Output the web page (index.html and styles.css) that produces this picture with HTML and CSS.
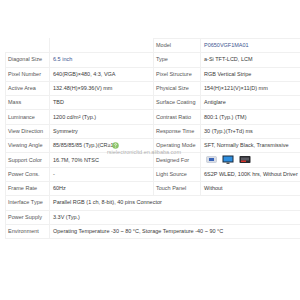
FILE: index.html
```html
<!DOCTYPE html>
<html>
<head>
<meta charset="utf-8">
<link rel="stylesheet" href="styles.css">
</head>
<body>
<div class="wrap">
<table class="spec">
<colgroup><col class="c1"><col class="c2"><col class="c3"><col class="c4"></colgroup>
<tr class="first"><td class="blank"></td><td class="blank"></td><td class="lab">Model</td><td class="val blue">P0650VGF1MA01</td></tr>
<tr><td class="lab">Diagonal Size</td><td class="val blue">6.5 inch</td><td class="lab">Type</td><td class="val">a-Si TFT-LCD, LCM</td></tr>
<tr><td class="lab">Pixel Number</td><td class="val">640(RGB)×480, 4:3, VGA</td><td class="lab">Pixel Structure</td><td class="val">RGB Vertical Stripe</td></tr>
<tr><td class="lab">Active Area</td><td class="val">132.48(H)×99.36(V) mm</td><td class="lab">Physical Size</td><td class="val">154(H)×121(V)×11(D) mm</td></tr>
<tr><td class="lab">Mass</td><td class="val">TBD</td><td class="lab">Surface Coating</td><td class="val">Antiglare</td></tr>
<tr><td class="lab">Luminance</td><td class="val">1200 cd/m² (Typ.)</td><td class="lab">Contrast Ratio</td><td class="val">800:1 (Typ.) (TM)</td></tr>
<tr><td class="lab">View Direction</td><td class="val">Symmetry</td><td class="lab">Response Time</td><td class="val">30 (Typ.)(Tr+Td) ms</td></tr>
<tr><td class="lab">Viewing Angle</td><td class="val">85/85/85/85 (Typ.)(CR≥10)</td><td class="lab">Operating Mode</td><td class="val">SFT, Normally Black, Transmissive</td></tr>
<tr><td class="lab">Support Color</td><td class="val">16.7M, 70% NTSC</td><td class="lab">Designed For</td><td class="val">
<span class="icons">
<svg width="11" height="9" viewBox="0 0 11 9"><rect x="0.5" y="1.5" width="10" height="6" rx="1" fill="#d8dde6" stroke="#b8c0cc" stroke-width="0.6"/><rect x="3" y="3" width="5" height="3" fill="#3a64b8"/></svg>
<svg width="12" height="9" viewBox="0 0 12 9"><rect x="0.5" y="0.5" width="11" height="7" fill="#1c2a3a"/><rect x="1.5" y="1.5" width="9" height="5" fill="#2f8fe0"/><rect x="4.5" y="7.5" width="3" height="1.5" fill="#555"/></svg>
<svg width="12" height="9" viewBox="0 0 12 9"><rect x="0.5" y="1" width="11" height="7" rx="0.8" fill="#2a2a2e"/><rect x="2" y="2.5" width="8" height="3" fill="#5a5a62"/><rect x="2" y="5.5" width="5" height="1.5" fill="#d8342c"/></svg>
</span></td></tr>
<tr><td class="lab">Power Cons.</td><td class="val">-</td><td class="lab">Light Source</td><td class="val">6S2P WLED, 100K hrs, Without Driver</td></tr>
<tr><td class="lab">Frame Rate</td><td class="val">60Hz</td><td class="lab">Touch Panel</td><td class="val">Without</td></tr>
<tr><td class="lab">Interface Type</td><td class="val" colspan="3">Parallel RGB (1 ch, 8-bit), 40 pins Connector</td></tr>
<tr><td class="lab">Power Supply</td><td class="val" colspan="3">3.3V (Typ.)</td></tr>
<tr><td class="lab">Environment</td><td class="val" colspan="3">Operating Temperature -30 ~ 80 °C, Storage Temperature -40 ~ 90 °C</td></tr>
</table>
<svg class="dot" width="7" height="7" viewBox="0 0 7 7"><circle cx="3.5" cy="3.5" r="3.2" fill="#8fc56a"/><path d="M2.6 2.7 Q2.7 1.7 3.6 1.7 Q4.5 1.8 4.4 2.6 Q4.3 3.2 3.6 3.5 L3.6 4.3" stroke="#fff" stroke-width="0.7" fill="none"/><circle cx="3.6" cy="5.2" r="0.4" fill="#fff"/></svg>
<div class="mtext">rsielectronicltd.en.alibaba.com</div>
</div>
</body>
</html>
```
FILE: styles.css
```css
html, body {
  margin: 0;
  padding: 0;
  background: #fff;
  overflow: hidden;
}
.wrap {
  position: relative;
  width: 300px;
  height: 300px;
  overflow: hidden;
  padding-top: 38px;
  padding-left: 5px;
  box-sizing: border-box;
}
.spec {
  border-collapse: collapse;
  table-layout: fixed;
  width: 340px;
  font-family: "Liberation Sans", Arial, sans-serif;
  font-size: 5.5px;
  color: #444;
}
.c1 { width: 44px; }
.c2 { width: 104px; }
.c3 { width: 47px; }
.c4 { width: 145px; }
.spec td {
  border: 1px solid #f0f0f0;
  height: 13.3px;
  padding: 0 2px 0 2px;
  white-space: nowrap;
  overflow: hidden;
  vertical-align: middle;
  line-height: 7px;
}
.spec td.lab {
  color: #555;
  padding-left: 2px;
}
.spec td.val {
  color: #3a3a3a;
  padding-left: 3px;
}
.spec td.blue { color: #3e5490; }
.spec tr.first td.blank {
  border-top-color: #fff;
  border-left-color: #fff;
}
.spec tr.first td.blank + td.blank {
  border-left-color: #fff;
}
.icons {
  display: inline-flex;
  align-items: center;
  gap: 5px;
  padding-left: 2px;
}
.icons svg { display: block; }
.dot {
  position: absolute;
  left: 112px;
  top: 142px;
  display: block;
}
.mtext {
  position: absolute;
  left: 107px;
  top: 149px;
  font-family: "Liberation Sans", Arial, sans-serif;
  font-size: 5.5px;
  line-height: 6px;
  color: rgba(150, 150, 150, 0.75);
  white-space: nowrap;
}
```
